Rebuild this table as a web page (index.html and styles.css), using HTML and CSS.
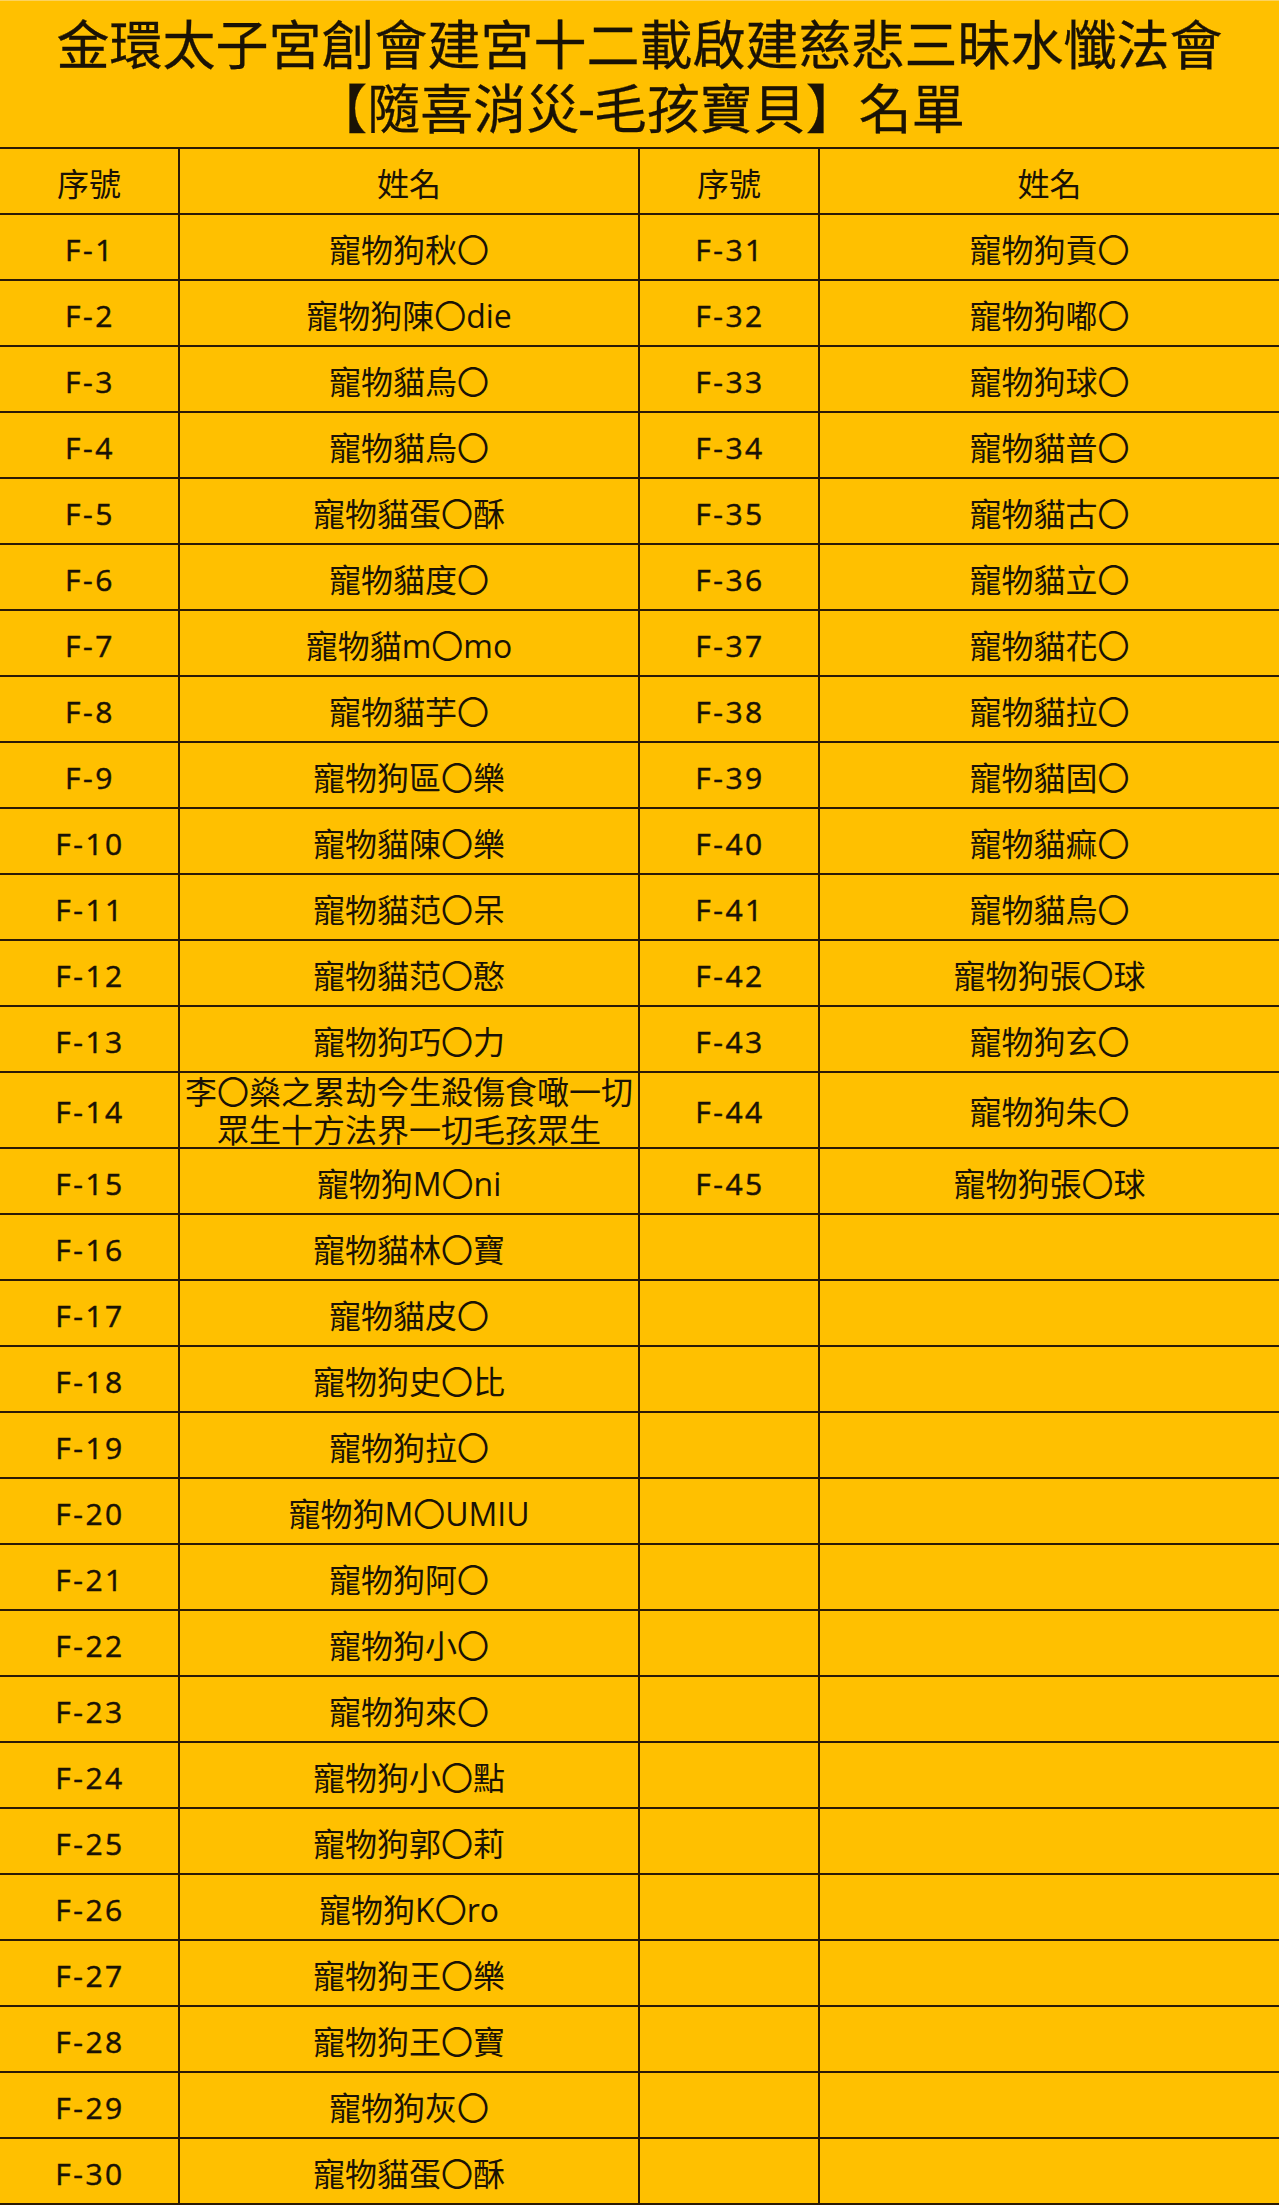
FILE: index.html
```html
<!DOCTYPE html>
<html lang="zh-Hant">
<head>
<meta charset="utf-8">
<title>毛孩寶貝名單</title>
<link rel="stylesheet" href="styles.css">
</head>
<body>
<div class="page">
  <header class="title">
    <div class="title-line">金環太子宮創會建宮十二載啟建慈悲三昧水懺法會</div>
    <div class="title-line">【隨喜消災-毛孩寶貝】名單</div>
  </header>
  <div class="table">
    <div class="row head"><div class="cell">序號</div><div class="cell">姓名</div><div class="cell">序號</div><div class="cell">姓名</div></div>
    <div class="row"><div class="cell seq">F-1</div><div class="cell name">寵物狗秋〇</div><div class="cell seq">F-31</div><div class="cell name">寵物狗貢〇</div></div>
    <div class="row"><div class="cell seq">F-2</div><div class="cell name">寵物狗陳〇die</div><div class="cell seq">F-32</div><div class="cell name">寵物狗嘟〇</div></div>
    <div class="row"><div class="cell seq">F-3</div><div class="cell name">寵物貓烏〇</div><div class="cell seq">F-33</div><div class="cell name">寵物狗球〇</div></div>
    <div class="row"><div class="cell seq">F-4</div><div class="cell name">寵物貓烏〇</div><div class="cell seq">F-34</div><div class="cell name">寵物貓普〇</div></div>
    <div class="row"><div class="cell seq">F-5</div><div class="cell name">寵物貓蛋〇酥</div><div class="cell seq">F-35</div><div class="cell name">寵物貓古〇</div></div>
    <div class="row"><div class="cell seq">F-6</div><div class="cell name">寵物貓度〇</div><div class="cell seq">F-36</div><div class="cell name">寵物貓立〇</div></div>
    <div class="row"><div class="cell seq">F-7</div><div class="cell name">寵物貓m〇mo</div><div class="cell seq">F-37</div><div class="cell name">寵物貓花〇</div></div>
    <div class="row"><div class="cell seq">F-8</div><div class="cell name">寵物貓芋〇</div><div class="cell seq">F-38</div><div class="cell name">寵物貓拉〇</div></div>
    <div class="row"><div class="cell seq">F-9</div><div class="cell name">寵物狗區〇樂</div><div class="cell seq">F-39</div><div class="cell name">寵物貓固〇</div></div>
    <div class="row"><div class="cell seq">F-10</div><div class="cell name">寵物貓陳〇樂</div><div class="cell seq">F-40</div><div class="cell name">寵物貓痲〇</div></div>
    <div class="row"><div class="cell seq">F-11</div><div class="cell name">寵物貓范〇呆</div><div class="cell seq">F-41</div><div class="cell name">寵物貓烏〇</div></div>
    <div class="row"><div class="cell seq">F-12</div><div class="cell name">寵物貓范〇憨</div><div class="cell seq">F-42</div><div class="cell name">寵物狗張〇球</div></div>
    <div class="row"><div class="cell seq">F-13</div><div class="cell name">寵物狗巧〇力</div><div class="cell seq">F-43</div><div class="cell name">寵物狗玄〇</div></div>
    <div class="row tall"><div class="cell seq">F-14</div><div class="cell name two"><span class="ln">李〇燊之累劫今生殺傷食噉一切</span><span class="ln">眾生十方法界一切毛孩眾生</span></div><div class="cell seq">F-44</div><div class="cell name">寵物狗朱〇</div></div>
    <div class="row"><div class="cell seq">F-15</div><div class="cell name">寵物狗M〇ni</div><div class="cell seq">F-45</div><div class="cell name">寵物狗張〇球</div></div>
    <div class="row"><div class="cell seq">F-16</div><div class="cell name">寵物貓林〇寶</div><div class="cell seq"></div><div class="cell name"></div></div>
    <div class="row"><div class="cell seq">F-17</div><div class="cell name">寵物貓皮〇</div><div class="cell seq"></div><div class="cell name"></div></div>
    <div class="row"><div class="cell seq">F-18</div><div class="cell name">寵物狗史〇比</div><div class="cell seq"></div><div class="cell name"></div></div>
    <div class="row"><div class="cell seq">F-19</div><div class="cell name">寵物狗拉〇</div><div class="cell seq"></div><div class="cell name"></div></div>
    <div class="row"><div class="cell seq">F-20</div><div class="cell name">寵物狗M〇UMIU</div><div class="cell seq"></div><div class="cell name"></div></div>
    <div class="row"><div class="cell seq">F-21</div><div class="cell name">寵物狗阿〇</div><div class="cell seq"></div><div class="cell name"></div></div>
    <div class="row"><div class="cell seq">F-22</div><div class="cell name">寵物狗小〇</div><div class="cell seq"></div><div class="cell name"></div></div>
    <div class="row"><div class="cell seq">F-23</div><div class="cell name">寵物狗來〇</div><div class="cell seq"></div><div class="cell name"></div></div>
    <div class="row"><div class="cell seq">F-24</div><div class="cell name">寵物狗小〇點</div><div class="cell seq"></div><div class="cell name"></div></div>
    <div class="row"><div class="cell seq">F-25</div><div class="cell name">寵物狗郭〇莉</div><div class="cell seq"></div><div class="cell name"></div></div>
    <div class="row"><div class="cell seq">F-26</div><div class="cell name">寵物狗K〇ro</div><div class="cell seq"></div><div class="cell name"></div></div>
    <div class="row"><div class="cell seq">F-27</div><div class="cell name">寵物狗王〇樂</div><div class="cell seq"></div><div class="cell name"></div></div>
    <div class="row"><div class="cell seq">F-28</div><div class="cell name">寵物狗王〇寶</div><div class="cell seq"></div><div class="cell name"></div></div>
    <div class="row"><div class="cell seq">F-29</div><div class="cell name">寵物狗灰〇</div><div class="cell seq"></div><div class="cell name"></div></div>
    <div class="row"><div class="cell seq">F-30</div><div class="cell name">寵物貓蛋〇酥</div><div class="cell seq"></div><div class="cell name"></div></div>
  </div>
</div>
</body>
</html>
```
FILE: styles.css
```css
html, body {
  margin: 0;
  padding: 0;
  background: #ffc000;
}

.page {
  width: 1279px;
  background: #ffc000;
  color: #1a1205;
  font-family: "Open Sans", "Noto Sans CJK TC", sans-serif;
}

.title {
  box-sizing: border-box;
  height: 147px;
  border-top: 1px solid #fcd35e;
  padding-top: 15px;
  text-align: center;
  font-family: Roboto, "Noto Sans CJK TC", sans-serif;
  font-size: 53px;
  font-weight: 400;
  -webkit-text-stroke: 0.3px #1a1205;
  white-space: nowrap;
}

.title-line {
  height: 63.5px;
  line-height: 63.5px;
}

.table {
  border-top: 2px solid #2b1a05;
}

.row {
  display: grid;
  grid-template-columns: 180px 460px 180px 459px;
  height: 66px;
  box-sizing: border-box;
  border-bottom: 2px solid #2b1a05;
}

.row.tall {
  height: 76px;
}

.cell {
  display: flex;
  align-items: center;
  justify-content: center;
  box-sizing: border-box;
  padding-top: 6px;
  border-right: 2px solid #2b1a05;
  font-size: 32px;
  line-height: 40px;
  white-space: nowrap;
}

.cell:last-child {
  border-right: none;
}

.seq {
  font-size: 30px;
  font-weight: 400;
  -webkit-text-stroke: 0.5px #1a1205;
  letter-spacing: 2.5px;
  padding-left: 2px;
}

.row.tall .seq,
.row.tall .cell:last-child {
  padding-top: 0;
}

.name.two {
  display: flex;
  flex-direction: column;
  justify-content: flex-start;
  align-items: center;
  padding-top: 1px;
  font-family: Roboto, "Noto Sans CJK TC", sans-serif;
}

.ln {
  display: block;
  height: 38px;
  line-height: 38px;
}
```
